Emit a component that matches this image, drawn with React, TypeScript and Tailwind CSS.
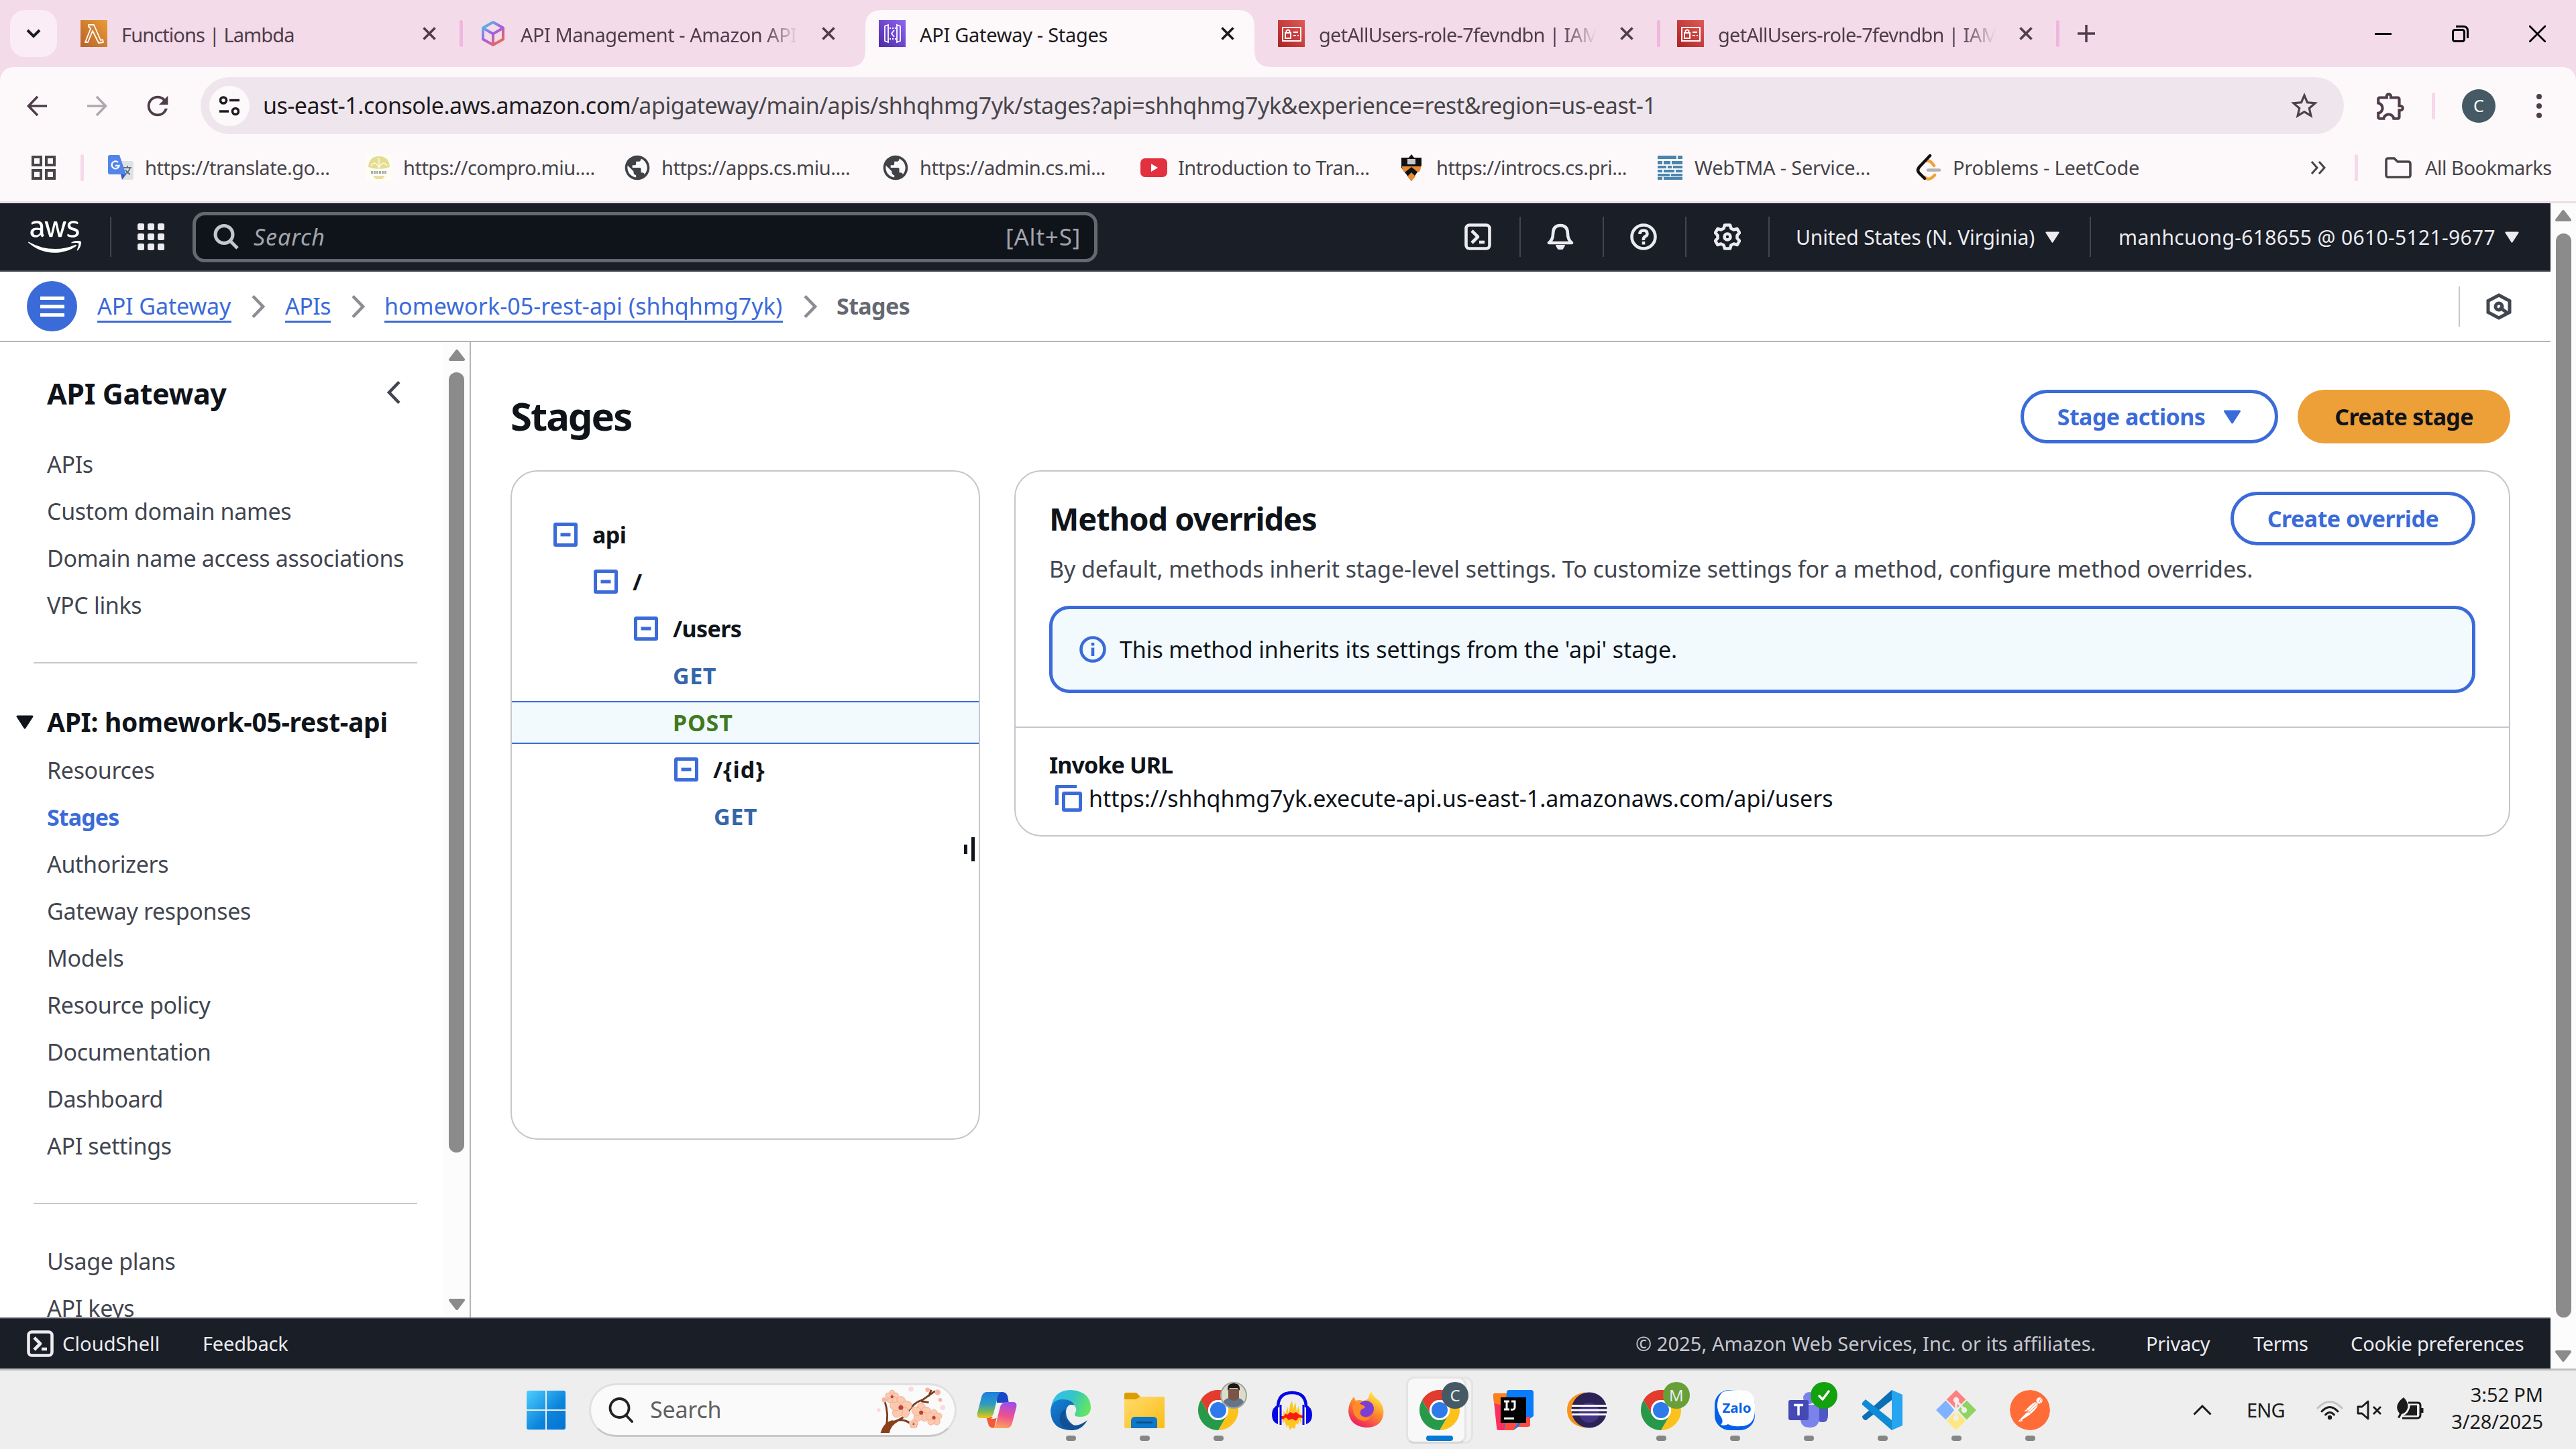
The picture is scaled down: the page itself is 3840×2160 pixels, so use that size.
import React from "react";
import { FaAws } from "react-icons/fa";
import { SiPostman } from "react-icons/si";
import { MdOutlineExtension, MdPublic, MdStarBorder, MdRefresh } from "react-icons/md";

type P = { className?: string; children?: React.ReactNode };

/* ---------- small shared glyphs ---------- */

const Cross = ({ className = "" }: P) => (
  <svg viewBox="0 0 20 20" className={`size-5 shrink-0 ${className}`} fill="none" stroke="currentColor" strokeWidth="3.6">
    <path d="M1.5 1.5l17 17M18.5 1.5l-17 17" />
  </svg>
);

const TriDown = ({ className = "" }: P) => (
  <svg viewBox="0 0 26 21" className={`shrink-0 ${className}`} fill="currentColor" stroke="currentColor" strokeWidth="3" strokeLinejoin="round">
    <path d="M2 2h22L13 19z" />
  </svg>
);

const ScrollArrow = ({ up }: { up?: boolean }) => (
  <svg viewBox="0 0 24 18" className="h-[18px] w-6 shrink-0" fill="#8b8b8b" stroke="#8b8b8b" strokeWidth="4" strokeLinejoin="round">
    <path d={up ? "M12 2L22 15H2z" : "M12 16L22 3H2z"} />
  </svg>
);

const Sep = ({ className = "" }: P) => <span className={`w-[5px] h-10 shrink-0 rounded-full ${className}`} />;

/* ---------- favicons ---------- */

const LambdaIcon = () => (
  <svg viewBox="0 0 40 40" className="size-10 shrink-0">
    <defs>
      <linearGradient id="lam" x1="0" y1="1" x2="1" y2="0">
        <stop offset="0" stopColor="#b8622a" />
        <stop offset="1" stopColor="#ea9b35" />
      </linearGradient>
    </defs>
    <rect width="40" height="40" fill="url(#lam)" />
    <path d="M12 7h8l10 23 3-1 1 4-7 1-9-18-7 17H7l8-20-2-3h-1z" fill="none" stroke="#fff" strokeWidth="1.8" strokeLinejoin="round" />
  </svg>
);

const CubeIcon = () => (
  <svg viewBox="0 0 40 40" className="size-10 shrink-0">
    <defs>
      <linearGradient id="cube" x1="0.1" y1="0" x2="0.8" y2="1">
        <stop offset="0" stopColor="#4cc5e6" />
        <stop offset="0.5" stopColor="#a45fe0" />
        <stop offset="1" stopColor="#f0694a" />
      </linearGradient>
    </defs>
    <path d="M20 3l15 8.500v17L20 37 5 28.500v-17zM5.500 12L20 20.500 34.500 12M20 20.500V36" fill="none" stroke="url(#cube)" strokeWidth="4" strokeLinejoin="round" />
  </svg>
);

const GatewayIcon = () => (
  <svg viewBox="0 0 40 40" className="size-10 shrink-0">
    <defs>
      <linearGradient id="gw" x1="0" y1="1" x2="1" y2="0">
        <stop offset="0" stopColor="#4b2ba5" />
        <stop offset="1" stopColor="#9163f5" />
      </linearGradient>
    </defs>
    <rect width="40" height="40" fill="url(#gw)" />
    <g fill="none" stroke="#fff" strokeWidth="1.800">
      <path d="M14 7L9 9v22l5 2zM27 7l5 2v22l-5 2zM23 15l-4 5 4 5" />
      <path d="M16 12h10M16 28h10" strokeDasharray="2 2" />
    </g>
  </svg>
);

const IamIcon = () => (
  <svg viewBox="0 0 40 40" className="size-10 shrink-0">
    <defs>
      <linearGradient id="iam" x1="0" y1="1" x2="1" y2="0">
        <stop offset="0" stopColor="#ad2323" />
        <stop offset="1" stopColor="#df5a57" />
      </linearGradient>
    </defs>
    <rect width="40" height="40" fill="url(#iam)" />
    <g fill="none" stroke="#fff" strokeWidth="2">
      <path d="M7 11h27v20H7zM11 19h8v8h-8zM12.500 19v-3q2.500-3 5 0v3M23 18h7M23 23h4M29 23h2" />
    </g>
  </svg>
);

/* ---------- browser tabs ---------- */

const fade = "[mask-image:linear-gradient(to_right,black_88%,transparent)]";

const tabs = [
  { icon: <LambdaIcon />, title: "Functions | Lambda", sep: true, style: "tracking-[-0.9px]" },
  { icon: <CubeIcon />, title: "API Management - Amazon API", sep: false, style: `tracking-[-0.5px] ${fade}` },
  { icon: <GatewayIcon />, title: "API Gateway - Stages", sep: false, active: true, style: "tracking-[-0.3px]" },
  { icon: <IamIcon />, title: "getAllUsers-role-7fevndbn | IAM", sep: true, style: `tracking-[-0.75px] ${fade}` },
  { icon: <IamIcon />, title: "getAllUsers-role-7fevndbn | IAM", sep: true, style: `tracking-[-0.75px] ${fade}` },
];

const TabStrip = () => (
  <div className="flex h-[100px] items-center pl-[15px] text-[29px] text-[#4f3d4a]">
    <div className="flex size-[70px] items-center justify-center rounded-[22px] bg-[#faedf5] text-[#1d1b1e]">
      <svg viewBox="0 0 24 16" className="h-4 w-6" fill="none" stroke="currentColor" strokeWidth="4">
        <path d="M3 3l9 9 9-9" />
      </svg>
    </div>
    <div className="w-[10px]" />
    {tabs.map((t, i) => (
      <div key={i} className={`relative flex h-[100px] w-[595px] items-center pl-[25px] ${t.active ? "text-[#1d1b1e]" : ""}`}>
        {t.active && (
          <svg viewBox="0 0 630 85" className="absolute bottom-0 left-[-20px] h-[85px] w-[630px]" fill="#fdf9fb">
            <path d="M0 85q25 0 25-25V25Q25 0 50 0h530q25 0 25 25v35q0 25 25 25z" />
          </svg>
        )}
        <div className="relative flex items-center">
          {t.icon}
          <div className={`ml-[21px] w-[414px] overflow-hidden pt-[3px] whitespace-nowrap ${t.style}`}>{t.title}</div>
          <Cross className="ml-[35px]" />
          {t.sep && <Sep className="ml-[35px] bg-[#f0b6dd]" />}
        </div>
      </div>
    ))}
    <svg viewBox="0 0 26 26" className="ml-[27px] size-[26px]" fill="none" stroke="currentColor" strokeWidth="3.500">
      <path d="M13 0v26M0 13h26" />
    </svg>
    <div className="ml-auto flex items-center gap-[90px] pr-[45px] text-black">
      <svg viewBox="0 0 25 25" className="size-[25px]"><path d="M0 12.500h25" stroke="currentColor" strokeWidth="3" /></svg>
      <svg viewBox="0 0 25 25" className="size-[25px]" fill="none" stroke="currentColor" strokeWidth="3">
        <rect x="1.500" y="6.500" width="17" height="17" rx="3" />
        <path d="M6 1.500h11q6.500 0 6.500 6.500v11" />
      </svg>
      <svg viewBox="0 0 25 25" className="size-[25px]"><path d="M0 0l25 25M25 0L0 25" stroke="currentColor" strokeWidth="2.800" /></svg>
    </div>
  </div>
);

/* ---------- address bar ---------- */

const AddressBar = () => (
  <div className="flex h-[115px] items-center pl-10 text-[#4f3d4a]">
    <svg viewBox="0 0 30 30" className="size-[30px]" fill="none" stroke="currentColor" strokeWidth="3.600">
      <path d="M30 15H3M16 1L2.500 15 16 29" />
    </svg>
    <svg viewBox="0 0 30 30" className="ml-[60px] size-[30px] text-[#b0a8ae]" fill="none" stroke="currentColor" strokeWidth="3.600">
      <path d="M0 15h27M14 1l13.500 14L14 29" />
    </svg>
    <MdRefresh className="ml-[52px] size-[46px]" />
    <div className="ml-[41px] flex h-[85px] w-[3195px] items-center rounded-full bg-[#efe6ed] pl-[13px] text-[#47454a]">
      <div className="flex size-[60px] items-center justify-center rounded-full bg-[#fdf9fb]">
        <svg viewBox="0 0 30 30" className="size-[30px]" fill="none" stroke="#1d1b1e" strokeWidth="3.600">
          <circle cx="6" cy="6.500" r="4.500" />
          <path d="M15 6.500h15M0 23h14" />
          <circle cx="24" cy="23" r="4.500" />
        </svg>
      </div>
      <div className="ml-[20px] w-[3019px] whitespace-nowrap text-[34px] tracking-[-0.46px]">
        <span className="text-[#1d1b1e]">us-east-1.console.aws.amazon.com</span>
        /apigateway/main/apis/shhqhmg7yk/stages?api=shhqhmg7yk&amp;experience=rest&amp;region=us-east-1
      </div>
      <MdStarBorder className="size-12" />
    </div>
    <MdOutlineExtension className="ml-[45px] size-[50px]" />
    <Sep className="ml-[36px] bg-[#f5d9eb]" />
    <div className="ml-[40px] flex size-[50px] items-center justify-center rounded-full bg-[#455a64] text-[25px] text-white">C</div>
    <svg viewBox="0 0 8 36" className="ml-[61px] h-9 w-2" fill="currentColor">
      <circle cx="4" cy="4" r="4" />
      <circle cx="4" cy="18" r="4" />
      <circle cx="4" cy="32" r="4" />
    </svg>
  </div>
);

/* ---------- bookmarks ---------- */

const Globe = () => <MdPublic className="size-11 -m-0.5 text-[#3f4246]" />;

const bookmarks = [
  {
    label: "https://translate.go...",
    icon: (
      <svg viewBox="0 0 40 40" className="size-10">
        <path d="M18 10h18q3 0 3 3v22q0 3-3 3H23z" fill="#dfe1e5" />
        <path d="M24 20h12M30 17v3M34 20q-3 8-8 10M27 23q3 5 7 7" stroke="#5f7480" strokeWidth="2" fill="none" />
        <path d="M20 30h8l-6 8z" fill="#3b5bb5" />
        <path d="M4 1h14l10 29H4q-3 0-3-3V4q0-3 3-3z" fill="#5285ec" />
        <path d="M16 12a5.500 5.500 0 1 0 1.500 5H12" stroke="#fff" strokeWidth="2.400" fill="none" />
      </svg>
    ),
  },
  {
    label: "https://compro.miu....",
    icon: (
      <svg viewBox="0 0 40 40" className="size-10">
        <rect width="40" height="40" fill="#fdfdf6" />
        <path d="M4 19Q5 3 20 3t16 16q-8 3-16 3T4 19z" fill="#e5dc93" />
        <path d="M8 17Q14 8 20 20Q26 8 32 17M20 6v16" stroke="#fff9d5" strokeWidth="1.500" fill="none" />
        <path d="M8 27h24" stroke="#a5b3a5" strokeWidth="4" strokeDasharray="3 1" />
        <path d="M11 32h18l-4 5H15z" fill="#e8df9f" />
      </svg>
    ),
  },
  { label: "https://apps.cs.miu....", icon: <Globe /> },
  { label: "https://admin.cs.mi...", icon: <Globe /> },
  {
    label: "Introduction to Tran...",
    icon: (
      <svg viewBox="0 0 40 40" className="size-10">
        <rect y="6" width="40" height="28" rx="7" fill="#e2303f" />
        <path d="M16 14l10 6-10 6z" fill="#fff" />
      </svg>
    ),
  },
  {
    label: "https://introcs.cs.pri...",
    icon: (
      <svg viewBox="0 0 40 40" className="size-10">
        <path d="M4 5h11l4-5 4 5h11v12L19 40 4 20z" fill="#111" />
        <path d="M13 7h12v8H13z" fill="#c9c9c9" />
        <path d="M5 18h28q0 7-4 9l-10-8-10 8q-4-3-4-9z" fill="#e58b33" />
        <path d="M19 27l6 6-6 7-6-7z" fill="#e58b33" />
      </svg>
    ),
  },
  {
    label: "WebTMA - Service...",
    wide: true,
    icon: (
      <svg viewBox="0 0 40 40" className="size-10" fill="#4a86ad">
        <path d="M1 2h28v5H1zM31 2h7v5h-7zM1 10h7v5H1zM10 10h10v5H10zM22 10h16v5H22zM1 17h13v4H1zM16 17h6v4h-6zM24 17h14v4H24zM1 23h7v4H1zM10 23h16v4H10zM28 23h10v4H28zM1 29h18v4H1zM21 29h17v4H21zM1 34h7v4H1zM10 34h28v4H10z" />
      </svg>
    ),
  },
  {
    label: "Problems - LeetCode",
    wide: true,
    icon: (
      <svg viewBox="0 0 40 40" className="size-10" fill="none" strokeWidth="4.500" strokeLinecap="round">
        <path d="M17 10q5-2 11 7M14 34q6 7 15-3" stroke="#eda43b" />
        <path d="M19 23.500h17" stroke="#b3b3b3" />
        <path d="M22 2L6 19q-4 5 0 9l8 8" stroke="#111" />
      </svg>
    ),
  },
];

const BookmarksBar = () => (
  <div className="flex h-[70px] items-center pl-[47px] text-[29px] tracking-[-0.3px] text-[#47454a]">
    <svg viewBox="0 0 36 36" className="size-9" fill="none" stroke="currentColor" strokeWidth="4">
      <path d="M2 2h12v12H2zM22 2h12v12H22zM2 22h12v12H2zM22 22h12v12H22z" />
    </svg>
    <Sep className="ml-[37px] bg-[#f5d9eb]" />
    <div className="ml-[35px] flex">
      {bookmarks.map((b, i) => (
        <div key={i} className={`flex w-[385px] items-center gap-4 whitespace-nowrap ${b.wide ? "tracking-[-0.2px]" : "tracking-[-0.5px]"}`}>
          <span className="flex size-10 shrink-0 items-center justify-center">{b.icon}</span>
          {b.label}
        </div>
      ))}
    </div>
    <svg viewBox="0 0 24 20" className="ml-[204px] h-5 w-6" fill="none" stroke="currentColor" strokeWidth="3">
      <path d="M2 1l8 9-8 9M13 1l8 9-8 9" />
    </svg>
    <Sep className="ml-[42px] bg-[#f5d9eb]" />
    <svg viewBox="0 0 40 32" className="ml-[40px] h-8 w-10" fill="none" stroke="currentColor" strokeWidth="3.600">
      <path d="M2 5q0-3 3-3h9l5 5h16q3 0 3 3v17q0 3-3 3H5q-3 0-3-3z" />
    </svg>
    <span className="ml-5 whitespace-nowrap tracking-[-0.5px]">All Bookmarks</span>
  </div>
);

/* ---------- AWS header ---------- */

const ShellIcon = ({ className = "" }: P) => (
  <svg viewBox="0 0 40 40" className={`size-10 shrink-0 ${className}`} fill="none" stroke="#ebebf0" strokeWidth="4.600">
    <rect x="2.500" y="2.500" width="35" height="35" rx="5" />
    <path d="M11 11l9 9-9 9" strokeLinejoin="round" />
    <path d="M22 28h8" />
  </svg>
);

const HeadSep = ({ className = "" }: P) => <span className={`h-[60px] w-[2px] shrink-0 bg-[#424650] ${className}`} />;

const AwsHeader = () => (
  <header className="flex h-[102px] items-center border-b-2 border-[#424650] bg-[#1a1e27] pl-[42px] text-[30px] text-[#ebebf0]">
    <FaAws className="h-[66px] w-[79px] text-white" />
    <HeadSep className="ml-[43px]" />
    <svg viewBox="0 0 40 40" className="ml-[39px] size-10" fill="#ebebf0">
      {[0, 15, 30].map((y) => [0, 15, 30].map((x) => <rect key={`${x}-${y}`} x={x} y={y} width="10" height="10" rx="2.500" />))}
    </svg>
    <div className="ml-[42px] flex h-[75px] w-[1349px] items-center rounded-[18px] border-[5px] border-[#656871] bg-[#0f141a] pr-[20px] pl-[26px]">
      <svg viewBox="0 0 38 38" className="size-[38px]" fill="none" stroke="#c6c6cd" strokeWidth="5">
        <circle cx="16" cy="15.500" r="13" />
        <path d="M25 25l11 11" />
      </svg>
      <span className="ml-[22px] text-[34px] text-[#a4a4ad] italic tracking-[0.9px]">Search</span>
      <span className="ml-auto text-[35px] tracking-[0.8px] text-[#a4a4ad]">[Alt+S]</span>
    </div>
    <ShellIcon className="ml-[547px]" />
    <HeadSep className="ml-[42px]" />
    <svg viewBox="0 0 40 40" className="ml-[39px] size-10" fill="none" stroke="#ebebf0" strokeWidth="4.600" strokeLinejoin="round">
      <path d="M20 3Q9 3 9 16q0 8-6 13h34q-6-5-6-13Q31 3 20 3z" />
      <path d="M14 33h12l-3 5h-6z" fill="#ebebf0" strokeWidth="2" />
    </svg>
    <HeadSep className="ml-[43px]" />
    <svg viewBox="0 0 40 40" className="ml-[39px] size-10" fill="none" stroke="#ebebf0" strokeWidth="4.600">
      <circle cx="20" cy="20" r="17.500" />
      <path d="M14.500 16q0-5.500 5.500-5.500t5.500 5q0 2.500-3 4T20 25" />
      <path d="M20 27v4.500" />
    </svg>
    <HeadSep className="ml-[42px]" />
    <svg viewBox="0 0 40 40" className="ml-[41px] size-10" fill="none" stroke="#ebebf0" strokeWidth="4.600" strokeLinejoin="round">
      <path d="M16 2.500h8l1.500 5 4 2 5-1.500 3.500 6-3.500 4v4l3.500 4-3.500 6-5-1.500-4 2-1.500 5h-8l-1.500-5-4-2-5 1.500-3.500-6 3.500-4v-4l-3.500-4 3.500-6 5 1.500 4-2z" />
      <circle cx="20" cy="20" r="4.500" />
    </svg>
    <HeadSep className="ml-[41px]" />
    <span className="ml-[39px] w-[372px] whitespace-nowrap tracking-[-0.15px]">United States (N. Virginia)</span>
    <TriDown className="h-[17px] w-[21px]" />
    <HeadSep className="ml-[45px]" />
    <span className="ml-[41px] w-[576px] whitespace-nowrap tracking-[0.35px]">manhcuong-618655 @ 0610-5121-9677</span>
    <TriDown className="h-[17px] w-[21px]" />
  </header>
);

/* ---------- breadcrumbs ---------- */

const CrumbChevron = ({ className = "" }: P) => (
  <svg viewBox="0 0 20 34" className={`h-[34px] w-5 shrink-0 ${className}`} fill="none" stroke="#8c8c94" strokeWidth="4.600">
    <path d="M2 1.500L17 17 2 32.500" />
  </svg>
);

const Crumb = ({ className = "", children }: P) => (
  <a className={`shrink-0 whitespace-nowrap border-b-[3px] border-[#3b6bd9] pt-[2px] leading-[44px] text-[#3b6bd9] ${className}`}>{children}</a>
);

const Breadcrumbs = () => (
  <nav className="flex h-[105px] items-center border-b-2 border-[#b4b4bb] bg-white pl-10 text-[34px]">
    <div className="flex size-[75px] items-center justify-center rounded-full bg-[#3b6bd9]">
      <svg viewBox="0 0 36 30" className="h-[30px] w-9" stroke="#fff" strokeWidth="5">
        <path d="M0 2.500h36M0 15h36M0 27.500h36" />
      </svg>
    </div>
    <Crumb className="ml-[30px] w-[200px] tracking-[-0.1px]">API Gateway</Crumb>
    <CrumbChevron className="ml-[30px]" />
    <Crumb className="ml-[30px] w-[68px] tracking-[-0.5px]">APIs</Crumb>
    <CrumbChevron className="ml-[31px]" />
    <Crumb className="ml-[29px] w-[594px] tracking-[0.1px]">homework-05-rest-api (shhqhmg7yk)</Crumb>
    <CrumbChevron className="ml-[31px]" />
    <span className="ml-[29px] font-bold tracking-[-0.6px] text-[#656871]">Stages</span>
    <span className="ml-auto h-[60px] w-[2px] bg-[#c6c6cd]" />
    <svg viewBox="0 0 38 40" className="mr-[58px] ml-[39px] h-10 w-[38px]" fill="none" stroke="#424650" strokeWidth="5">
      <path d="M19 3l16 8.500v17L19 37 3 28.500v-17z" />
      <circle cx="19" cy="20" r="5" />
      <path d="M20 21l11 8" />
    </svg>
  </nav>
);

/* ---------- sidebar ---------- */

const SideItem = ({ active, children }: { active?: boolean; children: React.ReactNode }) => (
  <li className={`h-[70px] pl-[70px] leading-[70px] whitespace-nowrap ${active ? "font-bold tracking-[-0.9px] text-[#3b6bd9]" : ""}`}>{children}</li>
);

const Divider = () => <div className="my-[50px] ml-[50px] h-[2px] w-[572px] bg-[#c6c6cd]" />;

const Sidebar = () => (
  <aside className="flex h-[1454px] w-[702px] shrink-0 overflow-hidden border-r-2 border-[#b4b4bb]">
    <div className="w-[661px] shrink-0 text-[34px] tracking-[-0.33px] text-[#424650]">
      <div className="flex h-[147px] items-start justify-between pt-[46px] pr-[64px] pl-[70px]">
        <h2 className="text-[43px] leading-[62px] font-bold tracking-[-0.4px] text-[#0f141a]">API Gateway</h2>
        <svg viewBox="0 0 20 34" className="mt-[12px] h-[34px] w-5" fill="none" stroke="#424650" strokeWidth="4.600">
          <path d="M18 1.500L3 17l15 15.500" />
        </svg>
      </div>
      <ul>
        {["APIs", "Custom domain names", "Domain name access associations", "VPC links"].map((s) => (
          <SideItem key={s}>{s}</SideItem>
        ))}
      </ul>
      <Divider />
      <div className="flex h-[74px] items-center pl-[24px]">
        <TriDown className="h-[21px] w-[26px] text-[#0f141a]" />
        <h3 className="ml-[20px] text-[39px] font-bold tracking-[-0.3px] whitespace-nowrap text-[#0f141a]">API: homework-05-rest-api</h3>
      </div>
      <ul>
        {["Resources", "Stages", "Authorizers", "Gateway responses", "Models", "Resource policy", "Documentation", "Dashboard", "API settings"].map((s) => (
          <SideItem key={s} active={s === "Stages"}>{s}</SideItem>
        ))}
      </ul>
      <Divider />
      <ul>
        <SideItem>Usage plans</SideItem>
        <SideItem>API keys</SideItem>
      </ul>
    </div>
    <div className="flex w-[39px] flex-col items-center bg-[#fcfcfc] pt-[11px] pb-[11px]">
      <ScrollArrow up />
      <div className="mt-[16px] h-[1163px] w-[23px] rounded-full bg-[#8b8b8b]" />
      <div className="mt-auto flex"><ScrollArrow /></div>
    </div>
  </aside>
);

/* ---------- main ---------- */

const tree = [
  { label: "api", indent: "pl-[62px]", box: true },
  { label: "/", indent: "pl-[122px]", box: true },
  { label: "/users", indent: "pl-[182px]", box: true },
  { label: "GET", indent: "pl-[240px] tracking-[0.6px]", tone: "text-[#3466a8]" },
  { label: "POST", indent: "pl-[240px] tracking-[0.8px]", tone: "text-[#3f7a20]", selected: true },
  { label: "/{id}", indent: "pl-[242px] tracking-[1px]", box: true },
  { label: "GET", indent: "pl-[301px] tracking-[0.6px]", tone: "text-[#3466a8]" },
];

const StageTree = () => (
  <section className="relative h-[998px] w-[700px] shrink-0 rounded-[40px] border-2 border-[#c6c6cd] pt-[62px] text-[34px] font-bold tracking-[-0.6px]">
    {tree.map((n, i) => (
      <div
        key={i}
        className={`mb-[6px] flex h-16 items-center border-y-2 ${n.indent} ${
          n.selected ? "border-[#3b6bd9] bg-[#f2fafe]" : "border-transparent"
        } ${n.tone ?? "text-[#0f141a]"}`}
      >
        {n.box && (
          <svg viewBox="0 0 36 36" className="mr-[22px] size-9" fill="none" stroke="#3b6bd9" strokeWidth="5">
            <rect x="2.500" y="2.500" width="31" height="31" rx="1" />
            <path d="M10.500 18h15" />
          </svg>
        )}
        {n.label}
      </div>
    ))}
    <svg viewBox="0 0 16 36" className="absolute top-[545px] left-[674px] h-9 w-4" fill="#0f141a">
      <path d="M0 11h5v14H0zM11 0h5v36h-5z" />
    </svg>
  </section>
);

const OutlineButton = ({ className = "", children }: P) => (
  <button className={`flex h-20 shrink-0 items-center justify-center rounded-full border-[5px] border-[#3b6bd9] text-[34px] font-bold tracking-[-0.55px] whitespace-nowrap text-[#3b6bd9] ${className}`}>
    {children}
  </button>
);

const Overrides = () => (
  <section className="h-[546px] w-[2230px] rounded-[40px] border-2 border-[#c6c6cd] text-[34px] text-[#0f141a]">
    <div className="h-[382px] border-b-2 border-[#c6c6cd] px-[50px] pt-[30px]">
      <div className="flex items-center justify-between">
        <h2 className="text-[47px] font-bold tracking-[-1.05px]">Method overrides</h2>
        <OutlineButton className="w-[365px]">Create override</OutlineButton>
      </div>
      <p className="mt-[12px] leading-[46px] whitespace-nowrap text-[#424650] tracking-[-0.08px]">
        By default, methods inherit stage-level settings. To customize settings for a method, configure method overrides.
      </p>
      <div className="mt-[32px] flex h-[130px] items-center rounded-[30px] border-[5px] border-[#3b6bd9] bg-[#f2fafe] pl-[40px]">
        <svg viewBox="0 0 40 40" className="size-10" fill="none" stroke="#3b6bd9" strokeWidth="4.600">
          <circle cx="20" cy="20" r="17.500" />
          <path d="M20 17.500V30M20 10v4.500" />
        </svg>
        <span className="ml-[20px] tracking-[-0.1px]">This method inherits its settings from the 'api' stage.</span>
      </div>
    </div>
    <div className="pt-[30px] pl-[50px]">
      <div className="leading-[50px] font-bold tracking-[-0.9px]">Invoke URL</div>
      <div className="flex h-[50px] items-center pl-[9px]">
        <svg viewBox="0 0 40 40" className="size-10" fill="none" stroke="#3b6bd9" strokeWidth="5">
          <path d="M2.500 30V2.500H32" strokeLinejoin="round" />
          <rect x="12.500" y="12.500" width="25" height="25" rx="1" />
        </svg>
        <span className="ml-[10px]">https://shhqhmg7yk.execute-api.us-east-1.amazonaws.com/api/users</span>
      </div>
    </div>
  </section>
);

const Main = () => (
  <main className="h-[1454px] pt-[71px] pl-[59px]">
    <div className="flex h-20 w-[2981px] items-center">
      <h1 className="pb-[4px] text-[58px] font-bold tracking-[-2px] text-[#0f141a]">Stages</h1>
      <OutlineButton className="ml-auto w-[384px]">
        Stage actions
        <TriDown className="ml-[27px] h-[21px] w-[27px]" />
      </OutlineButton>
      <button className="ml-[29px] flex h-20 w-[317px] items-center justify-center rounded-full bg-[#ed9f38] text-[34px] font-bold tracking-[-0.7px] text-[#0f141a]">
        Create stage
      </button>
    </div>
    <div className="mt-10 flex items-start gap-[51px]">
      <StageTree />
      <Overrides />
    </div>
  </main>
);

const Footer = () => (
  <footer className="flex h-[76px] items-center border-t-2 border-[#424650] bg-[#1a1e27] pl-10 text-[29px] whitespace-nowrap text-[#ebebf0]">
    <ShellIcon />
    <span className="ml-[13px] w-[209px] tracking-[0.1px]">CloudShell</span>
    <span className="tracking-[-0.2px]">Feedback</span>
    <span className="ml-auto w-[761px] tracking-[0.07px] text-[#c6c6cd]">© 2025, Amazon Web Services, Inc. or its affiliates.</span>
    <span className="w-[160px] tracking-[-0.2px]">Privacy</span>
    <span className="w-[145px] tracking-[-0.4px]">Terms</span>
    <span className="w-[298px] tracking-[-0.2px]">Cookie preferences</span>
  </footer>
);

/* ---------- taskbar ---------- */

const Chrome = ({ children }: P) => (
  <>
    <svg viewBox="-30 -30 60 60" className="size-[60px]">
      <path d="M-26 -15A30 30 0 0 1 26 -15L0 -15A15 15 0 0 0 -13 7.500Z" fill="#e33b2e" />
      <path d="M26 -15A30 30 0 0 1 0 30L13 7.500A15 15 0 0 0 0 -15Z" fill="#fcc21b" />
      <path d="M0 30A30 30 0 0 1 -26 -15L-13 7.500A15 15 0 0 0 13 7.500Z" fill="#27994a" />
      <circle r="15" fill="#fff" />
      <circle r="12" fill="#2f7aea" />
    </svg>
    {children}
  </>
);

const Badge = ({ className = "", children }: P) => (
  <span className={`absolute top-[-12px] left-[33px] flex size-[40px] items-center justify-center overflow-hidden rounded-full text-[24px] text-[#e4eaec] ${className}`}>
    {children}
  </span>
);

const Copilot = () => (
  <svg viewBox="0 0 60 60" className="size-[60px]">
    <defs>
      <linearGradient id="cp1" x1="0" y1="0" x2="0" y2="1">
        <stop offset="0" stopColor="#1f7fe0" />
        <stop offset="0.450" stopColor="#2b9bc4" />
        <stop offset="0.750" stopColor="#7cb857" />
        <stop offset="1" stopColor="#f5c713" />
      </linearGradient>
      <linearGradient id="cp2" x1="0.500" y1="0" x2="0.300" y2="1">
        <stop offset="0" stopColor="#a24de8" />
        <stop offset="0.500" stopColor="#ee5090" />
        <stop offset="1" stopColor="#fba65a" />
      </linearGradient>
    </defs>
    <path d="M30 3h8q6 0 8 6l2 11H30z" fill="#1a47c8" />
    <path d="M14 40h16l-4 17q-8 0-9-7z" fill="#f4593a" />
    <path d="M15 3h22q-5 2-6 8l-6 24q-2 7-9 7H6q-7 0-5-8l6-23q2-8 8-8z" fill="url(#cp1)" />
    <path d="M45 57H23q5-2 6-8l6-24q2-7 9-7h10q7 0 5 8l-6 23q-2 8-8 8z" fill="url(#cp2)" />
    <path d="M30 19h11q-5 1-7 7l-4 15q-1 2-9 2 3-1 5-9z" fill="#f3f3f3" />
  </svg>
);

const Edge = () => (
  <svg viewBox="0 0 60 60" className="size-[60px]">
    <defs>
      <linearGradient id="ed1" x1="0" y1="0.300" x2="1" y2="0.600">
        <stop offset="0" stopColor="#36bdf2" />
        <stop offset="0.500" stopColor="#35c5c5" />
        <stop offset="1" stopColor="#66e85a" />
      </linearGradient>
      <linearGradient id="ed2" x1="0" y1="0" x2="0.600" y2="1">
        <stop offset="0" stopColor="#1483d8" />
        <stop offset="1" stopColor="#0c59a4" />
      </linearGradient>
    </defs>
    <path d="M1 24Q6 0 30 0q30 2 30 27-1 13-16 13-9 0-8-4 4-6 1-11-4-9-15-10Q8 14 1 24z" fill="url(#ed1)" />
    <path d="M0 30Q2 14 18 14q14 0 18 9-5-2-9 0-4 4-4 10 0 12 12 20l-3 7Q0 60 0 30z" fill="url(#ed2)" />
    <path d="M23 29q-5 10 4 20 11 9 28-4-9 16-25 15Q12 56 14 40q1-9 9-11z" fill="#124f95" />
  </svg>
);

const Folder = () => (
  <svg viewBox="0 0 60 60" className="size-[60px]">
    <defs>
      <linearGradient id="fo" x1="0" y1="0" x2="1" y2="1">
        <stop offset="0" stopColor="#ffdb6e" />
        <stop offset="1" stopColor="#fbbd17" />
      </linearGradient>
    </defs>
    <path d="M0 7q0-3 3-3h13q3 0 5 3l3 3v5H0z" fill="#dd9d00" />
    <path d="M0 14h17l7-4h34q2 0 2 2v43q0 2-2 2H2q-2 0-2-2z" fill="url(#fo)" />
    <path d="M10 57V46q0-6 6-6h27q6 0 6 6v11z" fill="#0f77c8" />
    <path d="M18 48.500h24" stroke="#074c87" strokeWidth="2.500" />
  </svg>
);

const Audacity = () => (
  <svg viewBox="0 0 60 60" className="size-[60px]">
    <path d="M9 26Q9 4 30 4t21 22" fill="none" stroke="#0505e6" strokeWidth="4.500" />
    <path d="M16 40l2-10 2 10 3-16 2 12 2-14 3-6 2 12 3-10 2 14 3-8 2 14 2-6v20l-3-8-2 8-3-2-2 8-4-2-3 4-3-8-2 4-3-10-3 4z" fill="#ffc524" />
    <path d="M14 39h4l2-4 3 2 4-4 5 2 4-2 5 4 5 1v4l-6-1-4 5-6-3-5 2-4-4-5 3-4-3z" fill="#f71b12" />
    <path d="M9 22v29Q0 48 0 37t9-15zM51 22v29q9-3 9-14t-9-15z" fill="#0505e6" />
    <path d="M13 22v30M47 22v30" stroke="#0505e6" strokeWidth="3" />
  </svg>
);

const Firefox = () => (
  <svg viewBox="0 0 60 60" className="size-[60px]">
    <defs>
      <linearGradient id="ff" x1="0.800" y1="0.100" x2="0.300" y2="1">
        <stop offset="0" stopColor="#ffe94a" />
        <stop offset="0.450" stopColor="#ff8a2b" />
        <stop offset="1" stopColor="#ee1a63" />
      </linearGradient>
    </defs>
    <path d="M38 2q3 8 12 14 8 10 6 22-4 18-26 18Q6 54 4 32q0-12 8-22l3 6q6-2 10 0 6 0 9-4 1-6 4-10z" fill="url(#ff)" />
    <circle cx="30" cy="28" r="12" fill="#7a3fd4" />
    <path d="M10 22q8-4 14 0 6 2 4 5-8 2-6 9 4 8 16 4-8 10-20 3-8-6-8-21z" fill="#ff8c26" />
  </svg>
);

const Intellij = () => (
  <svg viewBox="0 0 60 60" className="size-[60px]">
    <path d="M0 8q0-3 3-3h15l16 30-16 25H8q-3 0-3-4z" fill="#fe2f5c" />
    <path d="M0 8q0-3 3-3h20v20L1 20z" fill="#fc801d" />
    <path d="M20 3q0-3 4-3h32q4 0 4 4v35L30 60H16z" fill="#087cfa" />
    <path d="M50 40h5v12q0 3-4 3H36zM16 60h14l10-16-20-6z" fill="#fe4a3f" />
    <rect x="11" y="11" width="38" height="38" fill="#000" />
    <path d="M16 17h8M20 17v12M16 29h8M27 17h5v9q0 4-6 3M16 42.500h15" fill="none" stroke="#fff" strokeWidth="3" />
  </svg>
);

const Eclipse = () => (
  <svg viewBox="0 0 60 60" className="size-[60px]">
    <path d="M28 3Q0 8 0 30t28 27Q9 48 9 30T28 3z" fill="#f7941e" />
    <circle cx="33" cy="30" r="26.500" fill="#2c2255" />
    <circle cx="33" cy="34" r="15" fill="#453485" />
    <path d="M7 23.500h52M6 30h54M7 36.500h52" stroke="#fff" strokeWidth="3" />
  </svg>
);

const Zalo = () => (
  <svg viewBox="0 0 60 60" className="size-[60px]">
    <rect width="60" height="60" rx="22" fill="#0560e8" />
    <path d="M12 3Q20 0 34 0h4q22 0 22 22v8q0 24-22 24-10 1-18-3-5 3-11 1 4-4 2-9-8-12-7-22Q5 9 12 3z" fill="#fff" />
    <text x="33" y="34" textAnchor="middle" fontSize="19" fontWeight="700" fill="#0560e8" textLength="43" lengthAdjust="spacingAndGlyphs">Zalo</text>
  </svg>
);

const Teams = () => (
  <>
    <svg viewBox="0 0 60 60" className="size-[60px]">
      <path d="M44 22h15v16q0 10-8 10t-8-6z" fill="#4f57c4" />
      <circle cx="31" cy="12" r="9" fill="#7b83eb" />
      <path d="M18 22h28v19q0 15-14 15T18 43z" fill="#7b83eb" />
      <rect y="15" width="30" height="30" rx="3" fill="#4549b4" />
      <path d="M8 22.500h14M15 22.500V38" stroke="#fff" strokeWidth="3.500" />
    </svg>
    <Badge className="bg-[#13a10e]">
      <svg viewBox="0 0 40 40" className="size-10" fill="none" stroke="#fff" strokeWidth="3.500" strokeLinecap="round" strokeLinejoin="round">
        <path d="M13 21l5 5 9-12" />
      </svg>
    </Badge>
  </>
);

const VsCode = () => (
  <svg viewBox="0 0 60 60" className="size-[60px]">
    <path d="M44 0L6 34 0 39q0 4 4 6h2L44 15z" fill="#0b6fb5" />
    <path d="M5 14L0 19v3l44 38V45z" fill="#0f8bd6" />
    <path d="M44 0l16 7v46l-16 7z" fill="#28a5f0" />
  </svg>
);

const GitKey = () => (
  <svg viewBox="0 0 60 60" className="size-[60px]">
    <path d="M30 0l15 15-15 15-15-15z" fill="#ff8080" />
    <path d="M15 15l12 15-12 15L0 30z" fill="#80b3ff" />
    <path d="M45 15l15 15-15 15-12-15z" fill="#8fd460" />
    <path d="M30 30l15 15-15 15-15-15z" fill="#ffe680" />
    <g stroke="#eee" strokeWidth="2.500" fill="#eee">
      <path d="M14 14l32 32M46 14L14 46" strokeWidth="2" />
      <path d="M30 14v27M30 16l12 13" strokeWidth="3.500" />
      <circle cx="30" cy="15" r="3" />
      <circle cx="30" cy="42" r="3" />
      <circle cx="42" cy="30" r="3" />
    </g>
  </svg>
);

const apps: { icon: React.ReactNode; dot?: boolean; active?: boolean }[] = [
  { icon: <Copilot /> },
  { icon: <Edge />, dot: true },
  { icon: <Folder />, dot: true },
  {
    icon: (
      <Chrome>
        <Badge className="border-2 border-[#a3a49b] bg-[#dcdccb]">
          <svg viewBox="0 0 40 40" className="size-10 shrink-0">
            <path d="M2 40q1-15 11-16h14q9 1 11 16z" fill="#64748b" />
            <path d="M12 10h16v14q-8 8-16 0z" fill="#7a5545" />
            <path d="M11 13q-1-11 9-11t9 11l-3-4H14z" fill="#1c1a18" />
          </svg>
        </Badge>
      </Chrome>
    ),
    dot: true,
  },
  { icon: <Audacity /> },
  { icon: <Firefox /> },
  { icon: <Chrome><Badge className="bg-[#455a64]">C</Badge></Chrome>, active: true },
  { icon: <Intellij /> },
  { icon: <Eclipse /> },
  { icon: <Chrome><Badge className="bg-[#689f38]">M</Badge></Chrome>, dot: true },
  { icon: <Zalo />, dot: true },
  { icon: <Teams />, dot: true },
  { icon: <VsCode />, dot: true },
  { icon: <GitKey />, dot: true },
  { icon: <SiPostman className="size-[60px] rounded-full bg-white text-[#ff6c37]" />, dot: true },
];

/* Flower positions: centre x, centre y, radius */
const flowers = [[38, 34, 15], [70, 42, 13], [24, 17, 9], [90, 50, 11], [58, 60, 6]];

const Blossom = () => (
  <svg viewBox="0 0 110 76" className="h-[72px] w-[104px]">
    <path d="M10 72q6-14 18-16 14-4 22-16 8-14 22-18l20-14M14 66q6-20-2-44M34 54q10-2 20 6h10M70 24l12 2M82 16l4-10" fill="none" stroke="#7a3b1d" strokeWidth="3" />
    <path d="M6 74q4-16 18-20l10 2q-12 6-14 18z" fill="#8c3f1b" />
    {flowers.map(([x, y, r], i) => (
      <g key={i}>
        {[0, 72, 144, 216, 288].map((a) => (
          <ellipse key={a} cx={x} cy={y - r * 0.6} rx={r * 0.5} ry={r * 0.58} transform={`rotate(${a} ${x} ${y})`} fill="#fbc9ae" stroke="#f3a48a" strokeWidth="0.800" />
        ))}
        <circle cx={x} cy={y} r={r * 0.25} fill="#b8443a" />
      </g>
    ))}
    <g fill="#f7b3a5">
      <circle cx="80" cy="6" r="3.500" /><circle cx="96" cy="10" r="4.500" /><circle cx="12" cy="22" r="4" /><circle cx="100" cy="22" r="3" />
    </g>
    <g fill="#fbd9dd">
      <circle cx="3" cy="38" r="3" /><circle cx="54" cy="5" r="4" /><circle cx="104" cy="34" r="4" />
    </g>
  </svg>
);

const Taskbar = () => (
  <div className="flex h-[120px] items-center border-t-[3px] border-[#bfbfbf] bg-[#eeeeee] pl-[785px]">
    <svg viewBox="0 0 58 58" className="size-[58px]">
      <defs>
        <linearGradient id="win" gradientUnits="userSpaceOnUse" x1="0" y1="0" x2="58" y2="58">
          <stop offset="0" stopColor="#4dcfff" />
          <stop offset="0.600" stopColor="#0b84dc" />
          <stop offset="1" stopColor="#0572d2" />
        </linearGradient>
      </defs>
      <path d="M3 0h25v28H0V3q0-3 3-3zM30 0h25q3 0 3 3v25H30zM0 30h28v28H3q-3 0-3-3zM30 30h28v25q0 3-3 3H30z" fill="url(#win)" />
    </svg>
    <div className="ml-[35px] flex h-20 w-[548px] items-center rounded-full border-[3px] border-[#e0e0e0] border-b-[#c8c8c8] bg-[#fafafa] pl-[26px]">
      <svg viewBox="0 0 37 38" className="h-[38px] w-[37px]" fill="none" stroke="#222" strokeWidth="3.800" strokeLinecap="round">
        <circle cx="16.500" cy="16" r="14" />
        <path d="M26.500 27L35 36" />
      </svg>
      <span className="ml-[25px] text-[34px] tracking-[-0.2px] text-[#606060]">Search</span>
      <span className="mr-[12px] ml-auto"><Blossom /></span>
    </div>
    <div className="ml-[5px] flex">
      {apps.map((a, i) => (
        <div key={i} className="relative flex h-[100px] w-[110px] items-center justify-center">
          {a.active && (
            <>
              <span className="absolute top-0 right-[5px] h-full w-[60px] rounded-[12px] border-[3px] border-[#e4e4e4] bg-[#f2f2f2]" />
              <span className="absolute top-0 left-[5px] h-full w-[90px] rounded-[12px] border-[3px] border-[#e4e4e4] border-b-[#d6d6d6] bg-[#f8f8f8]" />
            </>
          )}
          <div className="relative">{a.icon}</div>
          {a.dot && <span className="absolute bottom-[4px] h-[8px] w-[15px] rounded-full bg-[#868686]" />}
          {a.active && <span className="absolute bottom-[4px] h-[8px] w-[40px] rounded-full bg-[#0378d4]" />}
        </div>
      ))}
    </div>
    <div className="ml-auto flex items-center pr-[49px] text-[29px] tracking-[-0.3px] text-[#1b1b1b]">
      <svg viewBox="0 0 28 16" className="h-4 w-7" fill="none" stroke="currentColor" strokeWidth="3"><path d="M1.500 14.500L14 2l12.500 12.500" /></svg>
      <span className="ml-[52px] w-[60px] tracking-[-0.8px]">ENG</span>
      <svg viewBox="0 0 40 30" className="ml-[44px] h-[30px] w-10" fill="none" strokeWidth="3" strokeLinecap="round">
        <path d="M2 12Q20-7 38 12" stroke="#c3c3c3" />
        <path d="M8 17Q20 4 32 17M13.500 22Q20 15 26.500 22" stroke="#1b1b1b" />
        <circle cx="20" cy="26" r="3.200" fill="#1b1b1b" />
      </svg>
      <svg viewBox="0 0 38 30" className="ml-[20px] h-[30px] w-[38px]" fill="none" stroke="currentColor" strokeWidth="2.800" strokeLinejoin="round">
        <path d="M2 10h6l9-8v26l-9-8H2zM25 10l11 11M36 10L25 21" />
      </svg>
      <svg viewBox="0 0 42 34" className="mb-[4px] ml-[20px] h-[34px] w-[42px]" fill="none" stroke="currentColor" strokeWidth="3">
        <path d="M19 8h14q4 0 4 4v14q0 5-5 5H10M40 16v7" />
        <path d="M22 12h10v15H12q8-3 10-15z" fill="currentColor" stroke="none" />
        <path d="M12 0q8 8 6 16-2 7-9 9l-3 6-3-1 3-6Q-4 12 12 0z" fill="currentColor" stroke="none" />
      </svg>
      <div className="ml-[31px] w-[147px] pb-[5px] text-right leading-10 tracking-[-0.1px] whitespace-nowrap">
        3:52 PM
        <br />
        3/28/2025
      </div>
    </div>
  </div>
);

/* ---------- page ---------- */

export default function App() {
  return (
    <div className="h-[2160px] w-[3840px] overflow-hidden bg-[#f3dbe9] font-['Noto_Sans',sans-serif]">
      <TabStrip />
      <div className="h-[203px] rounded-t-[20px] border-b-[3px] border-[#ecdfe5] bg-[#fdf9fb]">
        <AddressBar />
        <BookmarksBar />
      </div>
      <div className="flex h-[1737px] bg-white">
        <div className="w-[3802px]">
          <AwsHeader />
          <Breadcrumbs />
          <div className="flex">
            <Sidebar />
            <Main />
          </div>
          <Footer />
        </div>
        <div className="flex w-[38px] flex-col items-center bg-[#fcfcfc] py-[10px]">
          <ScrollArrow up />
          <div className="mt-[17px] h-[1616px] w-[23px] rounded-full bg-[#8b8b8b]" />
          <div className="mt-auto flex"><ScrollArrow /></div>
        </div>
      </div>
      <Taskbar />
    </div>
  );
}
